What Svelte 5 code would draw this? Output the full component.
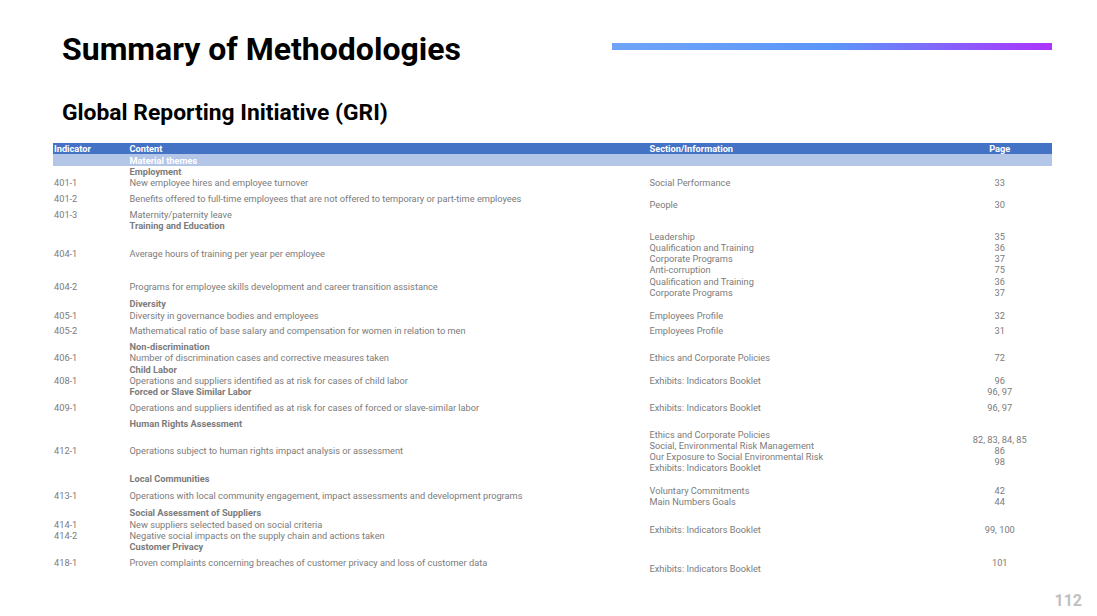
<script>
  // h = row height, sec/pg = lines of the section and page cells
  // up / secUp lift a cell half a pixel, low sits a cell on the row's bottom edge
  const rows = [
    { h: 11, head: "Employment" },
    { h: 11, id: "401-1", text: "New employee hires and employee turnover", sec: ["Social Performance"], pg: ["33"] },
    { h: 21, id: "401-2", text: "Benefits offered to full-time employees that are not offered to temporary or part-time employees", sec: ["People"], pg: ["30"], span: 2 },
    { h: 11, id: "401-3", text: "Maternity/paternity leave", skip: true },
    { h: 11, head: "Training and Education" },
    { h: 44, id: "404-1", text: "Average hours of training per year per employee", sec: ["Leadership", "Qualification and Training", "Corporate Programs", "Anti-corruption"], pg: ["35", "36", "37", "75"] },
    { h: 23, id: "404-2", text: "Programs for employee skills development and career transition assistance", sec: ["Qualification and Training", "Corporate Programs"], pg: ["36", "37"] },
    { h: 12, head: "Diversity" },
    { h: 11, id: "405-1", text: "Diversity in governance bodies and employees", sec: ["Employees Profile"], pg: ["32"] },
    { h: 19, id: "405-2", text: "Mathematical ratio of base salary and compensation for women in relation to men", sec: ["Employees Profile"], pg: ["31"] },
    { h: 12, head: "Non-discrimination", low: true },
    { h: 11, id: "406-1", text: "Number of discrimination cases and corrective measures taken", sec: ["Ethics and Corporate Policies"], pg: ["72"] },
    { h: 12, head: "Child Labor", low: true },
    { h: 11, id: "408-1", text: "Operations and suppliers identified as at risk for cases of child labor", sec: ["Exhibits: Indicators Booklet"], pg: ["96"] },
    { h: 11, head: "Forced or Slave Similar Labor", pg: ["96, 97"] },
    { h: 21, id: "409-1", text: "Operations and suppliers identified as at risk for cases of forced or slave-similar labor", sec: ["Exhibits: Indicators Booklet"], pg: ["96, 97"] },
    { h: 11, head: "Human Rights Assessment" },
    { h: 44, id: "412-1", text: "Operations subject to human rights impact analysis or assessment", sec: ["Ethics and Corporate Policies", "Social, Environmental Risk Management", "Our Exposure to Social Environmental Risk", "Exhibits: Indicators Booklet"], pg: ["82, 83, 84, 85", "86", "98"], up: true },
    { h: 11, head: "Local Communities" },
    { h: 23, id: "413-1", text: "Operations with local community engagement, impact assessments and development programs", sec: ["Voluntary Commitments", "Main Numbers Goals"], pg: ["42", "44"] },
    { h: 12, head: "Social Assessment of Suppliers" },
    { h: 11, id: "414-1", text: "New suppliers selected based on social criteria", sec: ["Exhibits: Indicators Booklet"], pg: ["99, 100"], span: 2, secUp: true },
    { h: 11, id: "414-2", text: "Negative social impacts on the supply chain and actions taken", skip: true },
    { h: 11, head: "Customer Privacy" },
    { h: 22, id: "418-1", text: "Proven complaints concerning breaches of customer privacy and loss of customer data", sec: ["Exhibits: Indicators Booklet"], pg: ["101"], low: true, up: true },
  ];
</script>

<div class="slide">
  <header class="top">
    <h1>Summary of Methodologies</h1>
    <div class="bar"></div>
  </header>
  <h2>Global Reporting Initiative (GRI)</h2>

  <table>
    <colgroup>
      <col class="c1" /><col class="c2" /><col class="c3" /><col class="c4" />
    </colgroup>
    <thead>
      <tr class="main">
        <th>Indicator</th>
        <th>Content</th>
        <th>Section/Information</th>
        <th class="pg">Page</th>
      </tr>
      <tr class="themes">
        <th></th>
        <th>Material themes</th>
        <th></th>
        <th></th>
      </tr>
    </thead>
    <tbody>
      {#each rows as r}
        <tr style="height: {r.h}px">
          {#if r.head}
            <td></td>
            <td class="head" class:low={r.low}>{r.head}</td>
            <td></td>
            <td class="pg">{r.pg ? r.pg[0] : ""}</td>
          {:else}
            <td class:up={r.up}>{r.id}</td>
            <td class:up={r.up}>{r.text}</td>
            {#if !r.skip}
              <td rowspan={r.span || 1} class:low={r.low} class:up={r.secUp}>
                {#each r.sec as line}<div>{line}</div>{/each}
              </td>
              <td rowspan={r.span || 1} class="pg" class:up={r.up || r.secUp}>
                {#each r.pg as line}<div>{line}</div>{/each}
              </td>
            {/if}
          {/if}
        </tr>
      {/each}
    </tbody>
  </table>

  <div class="num">112</div>
</div>

<style>
  :global(body) {
    background: #fff;
  }

  .slide {
    position: relative;
    width: 1097px;
    height: 616px;
    overflow: hidden;
    font-family: Roboto, sans-serif;
  }

  .top {
    display: flex;
    justify-content: space-between;
    align-items: center;
    padding: 30px 45px 0 62px;
    height: 38px;
  }

  h1 {
    margin: 0;
    font-size: 32px;
    line-height: 38px;
    font-weight: 700;
    color: #000;
  }

  .bar {
    width: 440px;
    height: 7px;
    margin-top: -6px;
    background: linear-gradient(90deg, #70a4f8 0%, #5b96f8 50%, #ad33fd 100%);
  }

  h2 {
    margin: 31px 0 0 62px;
    font-size: 22.85px;
    line-height: 28px;
    font-weight: 700;
    color: #000;
  }

  table {
    margin: 16px 0 0 53px;
    width: 999px;
    table-layout: fixed;
    border-collapse: collapse;
    font-size: 9.24px;
    line-height: 11px;
    color: #7b7b7b;
  }

  .c1 { width: 75.5px; }
  .c2 { width: 520px; }
  .c3 { width: 299px; }
  .c4 { width: 104.5px; }

  th, td {
    padding: 0 0 0 1px;
    text-align: left;
    white-space: nowrap;
    vertical-align: middle;
  }

  th {
    font-weight: 700;
    color: #fff;
  }

  .main {
    height: 11px;
    background: #4472c4;
  }

  .themes {
    height: 12px;
    background: #b4c6e7;
  }

  td.head {
    font-weight: 700;
    vertical-align: top;
  }

  th.pg, td.pg {
    text-align: center;
    padding-left: 0;
  }

  td.low {
    vertical-align: bottom;
  }

  td.up {
    padding-bottom: 1px;
  }

  .num {
    position: absolute;
    right: 15px;
    bottom: 6px;
    font-size: 16px;
    line-height: 18px;
    font-weight: 700;
    color: #bfbfbf;
  }
</style>
